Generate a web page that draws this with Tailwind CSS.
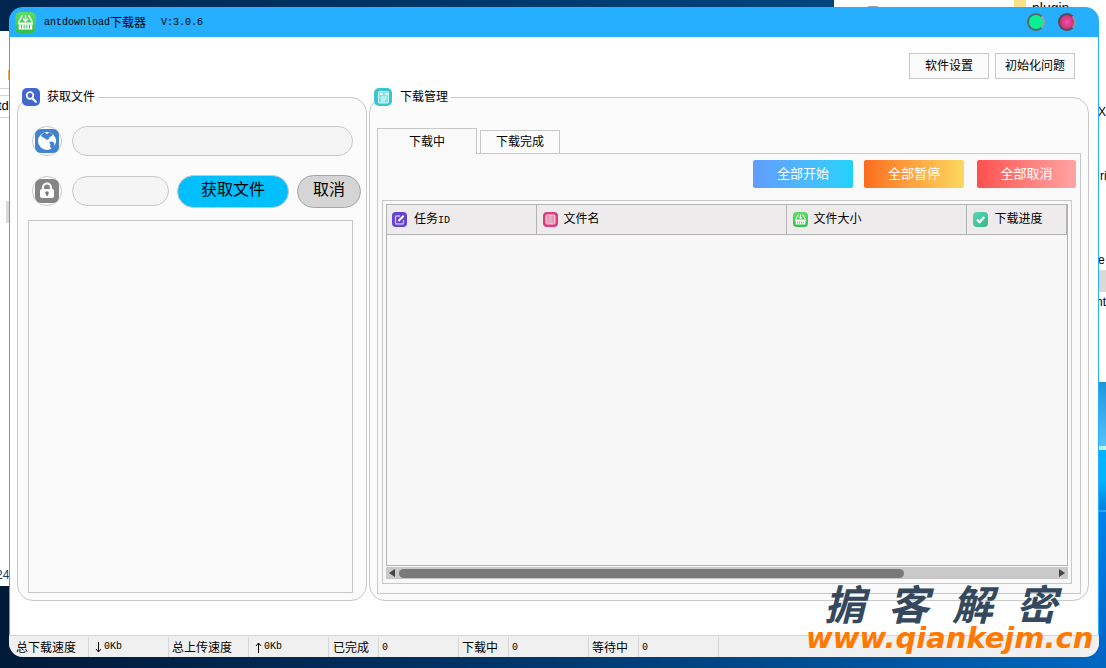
<!DOCTYPE html>
<html lang="zh-CN">
<head>
<meta charset="utf-8">
<title>antdownload下载器</title>
<script src="https://cdn.jsdelivr.net/npm/@tailwindcss/browser@4"></script>
</head>
<body class="relative h-screen overflow-hidden bg-linear-to-r from-[#001a38] via-[#00386e] to-[#0068c0] font-['Liberation_Sans','Noto_Sans_CJK_SC',sans-serif] text-xs text-black">

<svg width="0" height="0" class="absolute" aria-hidden="true">
  <defs>
    <linearGradient id="green" x1="0" y1="0" x2="0" y2="1"><stop offset="0" stop-color="#5fdc68"/><stop offset="1" stop-color="#2fc04a"/></linearGradient>
    <linearGradient id="mint" x1="0" y1="0" x2="1" y2="1"><stop offset="0" stop-color="#5ad6b4"/><stop offset="1" stop-color="#35b78c"/></linearGradient>
    <symbol id="basket" viewBox="0 0 20 20">
      <rect width="20" height="20" rx="5" fill="url(#green)"/>
      <path d="M7.500 3.800H6.700L3.500 9.500M12.500 3.800h.8l3.200 5.700" fill="none" stroke="#fff" stroke-width="1.300"/>
      <path d="M10 3.200v5.300M7.600 6.400 10 8.800l2.400-2.400" fill="none" stroke="#fff" stroke-width="1.300"/>
      <path d="M2.800 10h14.400v2H2.800z" fill="#fff"/>
      <path d="M3.600 12h12.800v4.600H3.600z" fill="#fff"/>
      <path d="M6.200 12.400v3.200M8.700 12.400v3.200M11.300 12.400v3.200M13.800 12.400v3.200" stroke="#3cc553" stroke-width="1"/>
    </symbol>
  </defs>
</svg>

<!-- desktop behind the window -->
<div class="absolute inset-x-0 top-0 h-[31px] bg-linear-to-r from-[#00264f] to-[#00508f]"></div>
<div class="absolute left-0 top-[31px] h-[555px] w-5 bg-white">
  <div class="absolute top-[57px] h-px w-5 bg-gray-300"></div>
  <div class="absolute top-[64px] h-[23px] w-5 border-y border-gray-300"></div>
  <span class="absolute -left-0.5 top-[67px] text-[13px] leading-4">td</span>
  <div class="absolute left-[8px] top-[39px] h-[10px] w-px bg-[#e8a860]"></div>
  <div class="absolute left-[6px] top-[170px] h-[22px] w-4 bg-[#d9d9d9]"></div>
  <span class="absolute -left-1 top-[536px] text-[12px] leading-4 text-[#1e395b]">24</span>
</div>
<div class="absolute left-[834px] right-0 top-0 h-[382px] overflow-hidden bg-white">
  <div class="absolute left-[34px] top-[6px] h-px w-[10px] bg-gray-400"></div>
  <div class="absolute left-[180px] top-0 h-5 w-[12px] bg-[#fbe08a]"></div>
  <span class="absolute left-[198px] top-0 text-[14px] leading-4">plugin</span>
  <span class="absolute left-[264px] top-[104px] text-[12px] leading-4">X</span>
  <span class="absolute left-[266px] top-[168px] text-[12px] leading-4">ri</span>
  <span class="absolute left-[264px] top-[252px] text-[12px] leading-4">e</span>
  <div class="absolute left-[265px] right-0 top-[270px] h-[22px] bg-[#d9d9d9]"></div>
  <span class="absolute left-[262px] top-[294px] text-[12px] leading-4">nt</span>
</div>
<div class="absolute bottom-[11px] right-0 top-[382px] w-5 bg-linear-to-b from-[#1c90dc] via-[#0082e8] to-[#0064c8]">
  <div class="absolute inset-x-0 top-0 h-[66px] bg-linear-to-b from-[#1b96dc] to-[#56c4fb]"></div>
  <div class="absolute inset-x-0 top-[64px] h-1 bg-[#c0f4ff]"></div>
  <div class="absolute inset-x-0 top-[68px] h-[60px] bg-linear-to-b from-[#00b4ff] via-[#00b4ff] to-[#0080e0]"></div>
  <div class="absolute inset-x-0 top-[128px] h-0.5 bg-[#2aa4f4]"></div>
</div>

<div class="relative h-full pb-[11px] pl-[9px] pr-[7px] pt-[7px]">
<div class="flex h-full flex-col overflow-hidden rounded-[14px] bg-[#26aeff]">

  <header class="flex h-[30px] shrink-0 items-center pl-[6px] pr-[23px]">
    <svg class="size-[21px]" aria-hidden="true"><use href="#basket"/></svg>
    <h1 class="ml-2 flex items-center pt-0.5"><span class="font-['Liberation_Mono',monospace] text-[10px]">antdownload</span>下载器</h1>
    <span class="ml-[15px] pt-0.5 font-['Liberation_Mono',monospace] text-[10px]">V:3.0.6</span>
    <div class="ml-auto flex gap-[13px]">
      <button aria-label="最小化" class="size-[18px] rounded-full border-2 border-[#596966] border-r-[#a0a0a0] bg-[#08f096]"></button>
      <button aria-label="关闭" class="size-[18px] rounded-full border-2 border-[#564b50] border-r-[#999] bg-radial from-[#f54fae] to-[#b82561]"></button>
    </div>
  </header>

  <main class="mx-px flex min-h-0 flex-1 flex-col bg-white pb-[34px] pl-[7px] pr-[9px] pt-4">
    <div class="mr-[14px] flex justify-end gap-[6px]">
      <button class="h-[26px] w-20 border border-[#c8c8c8] bg-[#fbfbfb]">软件设置</button>
      <button class="h-[26px] w-20 border border-[#c8c8c8] bg-[#fbfbfb]">初始化问题</button>
    </div>

    <div class="mt-[9px] flex min-h-0 flex-1 gap-0.5">
      <fieldset class="flex w-[350px] min-w-0 shrink-0 flex-col rounded-[16px] border border-[#c8c8c8] bg-[#fbfbfb] pb-[7px] pl-[10px] pr-[5px]">
        <legend class="-ml-[6px] flex h-[18px] items-center gap-[7px] pr-[3px]">
          <svg class="size-[18px]" viewBox="0 0 18 18" aria-hidden="true"><rect width="18" height="18" rx="5" fill="#4267ce"/><circle cx="8" cy="7.500" r="3.300" fill="none" stroke="#fff" stroke-width="1.700"/><path d="m10.600 10.400 3.200 3.300" stroke="#fff" stroke-width="2.200" stroke-linecap="round"/></svg>
          获取文件
        </legend>
        <div class="flex min-h-0 w-full min-w-0 flex-1 flex-col pt-5">
          <div class="flex items-center gap-[10px] pl-1 pr-2">
            <label for="url" aria-label="网址" class="flex size-[30px] shrink-0 items-center justify-center rounded-full border border-[#c8c8c8] bg-white">
              <svg class="size-6" viewBox="0 0 24 24" aria-hidden="true"><rect width="24" height="24" rx="6" fill="#3f83d1"/><circle cx="12" cy="12" r="9" fill="#fff"/><path d="M9.500 3.500 12 5l2.500-1.500 3 1.500-.5 2-2.500 1-.5 2-2.500 1L9.500 9 7 8l-1-2z" fill="#3f83d1"/><path d="m14 13 3.500-.5 2 2-.5 3-2.500 2.500-1.500-2.500.5-2z" fill="#3f83d1"/></svg>
            </label>
            <input id="url" type="text" class="h-[30px] w-0 min-w-0 flex-1 rounded-full border border-[#c8c8c8] bg-[#f5f5f5] px-3">
          </div>
          <div class="mt-[19px] flex items-start pl-1">
            <label for="pwd" aria-label="密码" class="mt-px flex size-[30px] shrink-0 items-center justify-center rounded-full border border-[#c8c8c8] bg-white">
              <svg class="size-6" viewBox="0 0 24 24" aria-hidden="true"><rect width="24" height="24" rx="6" fill="#858585"/><path d="M8 11V8.500a4 4 0 0 1 8 0V11" fill="none" stroke="#fff" stroke-width="2.200"/><rect x="5" y="10" width="14" height="9" rx="2" fill="#fff"/><circle cx="12" cy="14" r="1.800" fill="#777"/><path d="M11.200 14h1.600v3h-1.600z" fill="#777"/></svg>
            </label>
            <input id="pwd" type="text" class="ml-[10px] mt-px h-[30px] w-0 min-w-0 flex-1 rounded-full border border-[#c8c8c8] bg-[#f5f5f5] px-3">
            <button class="ml-2 h-[33px] w-28 shrink-0 rounded-full border border-[#c8c8c8] bg-[#00bfff] pb-1 text-base leading-6">获取文件</button>
            <button class="ml-2 h-[33px] w-16 shrink-0 rounded-full border border-[#a5a5a5] bg-[#d5d5d5] pb-1 text-base leading-6">取消</button>
          </div>
          <div class="mr-2 mt-3 min-h-0 flex-1 border border-[#c8c8c8] bg-[#f9f9f9]"></div>
        </div>
      </fieldset>

      <fieldset class="flex min-w-0 flex-1 flex-col rounded-[16px] border border-[#c8c8c8] bg-[#fbfbfb] px-[7px] pb-[6px]">
        <legend class="-ml-[3px] flex h-[18px] items-center gap-2 pr-[3px]">
          <svg class="size-[18px]" viewBox="0 0 18 18" aria-hidden="true"><rect width="18" height="18" rx="5" fill="#38c5d0"/><rect x="4.500" y="3.500" width="10" height="11.500" rx="1" fill="#7fe0e6" stroke="#d5fafa"/><path d="M6 6h2.500M11 6h2.500" stroke="#fff" stroke-width="2"/><path d="M7 9h5.500M7 11h5.500M7 13h4" stroke="#e8ffff"/></svg>
          下载管理
        </legend>
        <div class="flex min-h-0 flex-1 flex-col pt-[22px]">
          <div role="tablist" class="flex h-[25px] items-end gap-[3px]">
            <button role="tab" aria-selected="true" class="relative z-10 -mb-px h-[26px] w-[100px] border border-b-0 border-[#c8c8c8] bg-[#f9f9f9]">下载中</button>
            <button role="tab" aria-selected="false" class="h-[23px] w-20 border border-b-0 border-[#c8c8c8] bg-[#fbfbfb]">下载完成</button>
          </div>
          <div role="tabpanel" class="flex min-h-0 flex-1 flex-col border border-[#c8c8c8] bg-[#f9f9f9] pb-[9px] pl-1 pr-2 pt-[6px]">
            <div class="-mr-1 flex justify-end text-[13px] text-white">
              <button class="h-7 w-[100px] rounded-[2px] bg-linear-to-r from-[#609cff] to-[#1cd2fa]">全部开始</button>
              <button class="ml-[11px] h-7 w-[100px] rounded-[2px] bg-linear-to-r from-[#fa6c1c] to-[#fbd85f]">全部暂停</button>
              <button class="ml-[13px] h-7 w-[99px] rounded-[2px] bg-linear-to-r from-[#ff4f4f] to-[#ffa3a3]">全部取消</button>
            </div>
            <div class="mt-3 flex min-h-0 flex-1 flex-col border border-[#c8c8c8] px-[3px] pb-1 pt-[3px]">
              <div class="min-h-0 flex-1 overflow-hidden border border-[#b4b4b4] bg-[#f7f7f7]">
                <table class="w-full table-fixed border-collapse whitespace-nowrap text-left">
                  <thead class="bg-[#eeebec]">
                    <tr class="h-[29px] border-b border-[#b4b4b4]">
                      <th class="w-[149px] border-r border-[#b4b4b4] p-0 pl-[5px] font-normal"><div class="flex items-center gap-[7px]"><svg class="size-[15px]" viewBox="0 0 15 15" aria-hidden="true"><rect width="15" height="15" rx="4" fill="#6442cc"/><path d="M8 4H4.500a1 1 0 0 0-1 1v6a1 1 0 0 0 1 1h6a1 1 0 0 0 1-1V8" fill="none" stroke="#c9bcff" stroke-width="1.300"/><path d="m6.500 9 5.200-5.200" stroke="#fff" stroke-width="2"/></svg><span>任务<span class="font-['Liberation_Mono',monospace] text-[10px]">ID</span></span></div></th>
                      <th class="w-[250px] border-r border-[#b4b4b4] p-0 pl-[6px] font-normal"><div class="flex items-center gap-[6px]"><svg class="size-[15px]" viewBox="0 0 15 15" aria-hidden="true"><rect width="15" height="15" rx="4" fill="#dc3d81"/><rect x="3" y="3" width="9" height="9" rx="1" fill="#e7a6c2" stroke="#f7d2e2"/><path d="M5 3v9M10 3v9" stroke="#d98bb0" stroke-width=".8"/></svg>文件名</div></th>
                      <th class="w-[180px] border-r border-[#b4b4b4] p-0 pl-[6px] font-normal"><div class="flex items-center gap-[6px]"><svg class="size-[15px]" aria-hidden="true"><use href="#basket"/></svg>文件大小</div></th>
                      <th class="border-r border-[#b4b4b4] p-0 pl-[6px] font-normal"><div class="flex items-center gap-[7px]"><svg class="size-[15px]" viewBox="0 0 15 15" aria-hidden="true"><rect width="15" height="15" rx="4" fill="url(#mint)"/><path d="m4 7.500 2.700 2.700L11.200 5" fill="none" stroke="#fff" stroke-width="2.200"/></svg>下载进度</div></th>
                      <th class="w-px p-0"></th>
                    </tr>
                  </thead>
                </table>
              </div>
              <div class="mt-px flex h-3 items-center bg-[#c9c9c9] px-[3px]">
                <svg class="h-2 w-[6px]" viewBox="0 0 6 8" aria-hidden="true"><path d="M6 0v8L0 4z" fill="#444"/></svg>
                <div class="mx-1 flex-1"><div class="h-[9px] w-[77%] rounded-full bg-[#797979]"></div></div>
                <svg class="h-2 w-[6px]" viewBox="0 0 6 8" aria-hidden="true"><path d="M0 0v8l6-4z" fill="#444"/></svg>
              </div>
            </div>
          </div>
        </div>
      </fieldset>
    </div>
  </main>

  <footer class="flex h-[22px] shrink-0 whitespace-nowrap border-t border-[#d6d6d6] bg-[#f0f0f0] pl-px pt-px leading-[22px]">
    <div class="w-[79px] border-r border-[#d6d6d6] pl-[6px]">总下载速度</div>
    <div class="flex w-20 items-center border-r border-[#d6d6d6] pl-[6px] font-['Liberation_Mono',monospace] text-[10px]"><svg class="mr-0.5 h-[11px] w-[7px]" viewBox="0 0 7 11" aria-hidden="true"><path d="M3.500 0v10M1 7l2.500 3L6 7" fill="none" stroke="#000"/></svg>0Kb</div>
    <div class="w-20 border-r border-[#d6d6d6] pl-[3px]">总上传速度</div>
    <div class="flex w-20 items-center border-r border-[#d6d6d6] pl-[6px] font-['Liberation_Mono',monospace] text-[10px]"><svg class="mr-0.5 h-[11px] w-[7px]" viewBox="0 0 7 11" aria-hidden="true"><path d="M3.500 11V1M1 4l2.500-3L6 4" fill="none" stroke="#000"/></svg>0Kb</div>
    <div class="w-[50px] border-r border-[#d6d6d6] pl-1">已完成</div>
    <div class="w-20 border-r border-[#d6d6d6] pl-[3px] font-['Liberation_Mono',monospace] text-[10px]">0</div>
    <div class="w-[50px] border-r border-[#d6d6d6] pl-[3px]">下载中</div>
    <div class="w-20 border-r border-[#d6d6d6] pl-[3px] font-['Liberation_Mono',monospace] text-[10px]">0</div>
    <div class="w-[50px] border-r border-[#d6d6d6] pl-[3px]">等待中</div>
    <div class="w-20 border-r border-[#d6d6d6] pl-[3px] font-['Liberation_Mono',monospace] text-[10px]">0</div>
  </footer>
</div>
</div>

<!-- watermark -->
<div class="absolute bottom-[14px] right-1 w-[296px] font-bold italic">
  <div class="flex gap-[23px] pl-[18px] font-['Noto_Sans_CJK_SC',sans-serif] text-[41px] leading-[40px] text-[#34495e]"><span>掮</span><span>客</span><span>解</span><span>密</span></div>
  <div class="font-['DejaVu_Sans',sans-serif] text-[29px] leading-8 text-[#ff7800]">www.qiankejm.cn</div>
</div>
</body>
</html>
